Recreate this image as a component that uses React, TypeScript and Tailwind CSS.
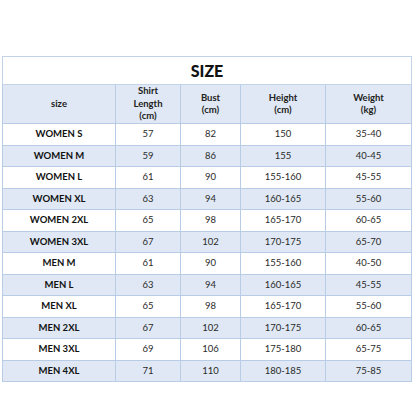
const rows = [
  ["WOMEN S", "57", "82", "150", "35-40"],
  ["WOMEN M", "59", "86", "155", "40-45"],
  ["WOMEN L", "61", "90", "155-160", "45-55"],
  ["WOMEN XL", "63", "94", "160-165", "55-60"],
  ["WOMEN 2XL", "65", "98", "165-170", "60-65"],
  ["WOMEN 3XL", "67", "102", "170-175", "65-70"],
  ["MEN M", "61", "90", "155-160", "40-50"],
  ["MEN L", "63", "94", "160-165", "45-55"],
  ["MEN XL", "65", "98", "165-170", "55-60"],
  ["MEN 2XL", "67", "102", "170-175", "60-65"],
  ["MEN 3XL", "69", "106", "175-180", "65-75"],
  ["MEN 4XL", "71", "110", "180-185", "75-85"],
];

export default function App() {
  return (
    <div
      className="w-[416px] h-[416px] bg-white pt-[56px] pl-[2px]"
      style={{ fontFamily: "Lato, 'Noto Sans', sans-serif" }}
    >
      <table className="table-fixed border-collapse w-[409px] text-[#1a1a1a] text-[9.5px]">
        <colgroup>
          <col className="w-[113px]" />
          <col className="w-[65px]" />
          <col className="w-[60px]" />
          <col className="w-[85px]" />
          <col className="w-[86px]" />
        </colgroup>
        <thead>
          <tr className="h-[28px]">
            <th colSpan={5} className="border border-[#c3d3e8] text-[16px] font-black text-[#111]">
              SIZE
            </th>
          </tr>
          <tr className="h-[39px] bg-[#dfe8f4] font-bold leading-[12.5px] text-[#222]">
            <th className="border border-[#b9cce6]">size</th>
            <th className="border border-[#b9cce6]">
              Shirt
              <br />
              Length
              <br />
              (cm)
            </th>
            <th className="border border-[#b9cce6]">
              Bust
              <br />
              (cm)
            </th>
            <th className="border border-[#b9cce6]">
              Height
              <br />
              (cm)
            </th>
            <th className="border border-[#b9cce6]">
              Weight
              <br />
              (kg)
            </th>
          </tr>
        </thead>
        <tbody>
          {rows.map((r, i) => (
            <tr key={i} className={i % 2 === 1 ? "h-[21.5px] bg-[#dfe8f4]" : "h-[21.5px] bg-white"}>
              {r.map((c, j) => (
                <td
                  key={j}
                  className={
                    j === 0
                      ? "border border-[#b9cce6] text-center font-bold text-[#111]"
                      : "border border-[#b9cce6] text-center text-[#2a2a2a]"
                  }
                >
                  {c}
                </td>
              ))}
            </tr>
          ))}
        </tbody>
      </table>
    </div>
  );
}
